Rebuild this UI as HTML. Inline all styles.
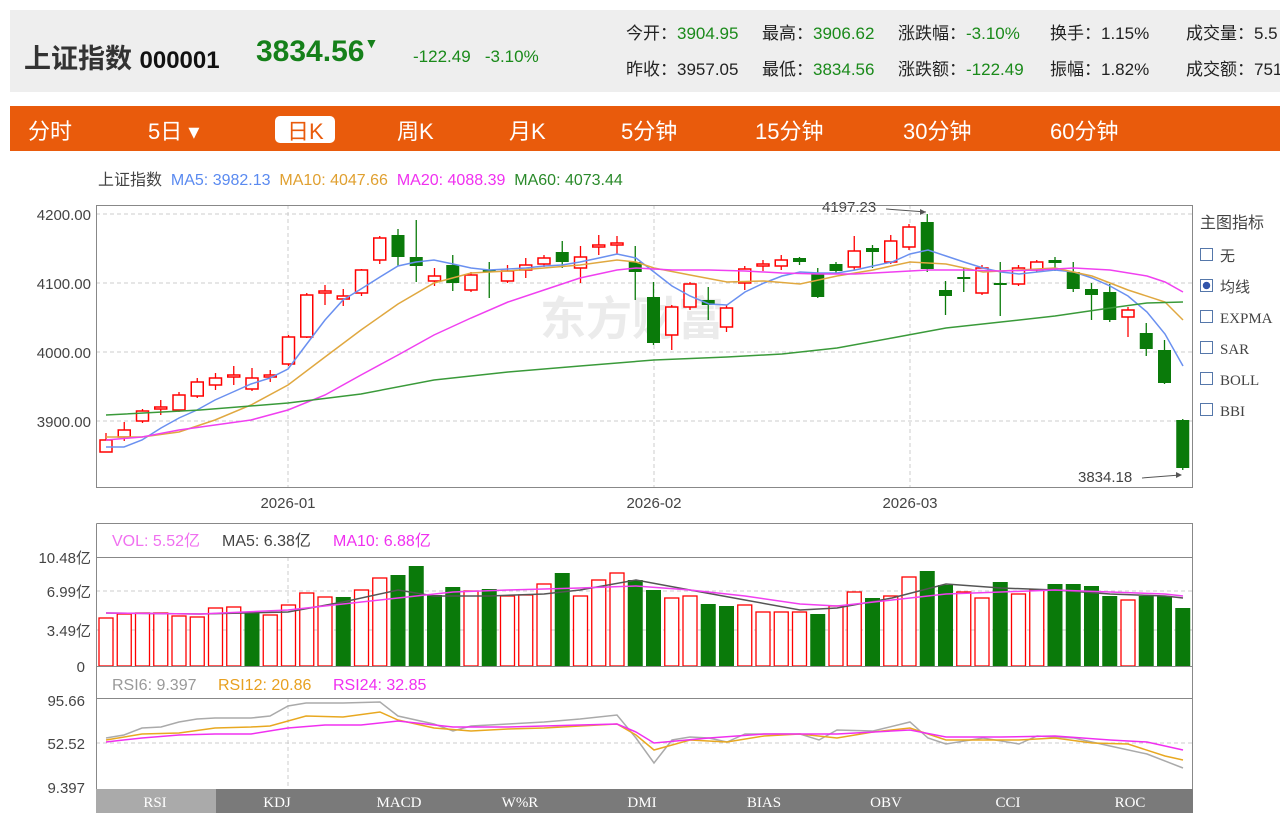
<!DOCTYPE html><html><head><meta charset="utf-8"><style>
body{margin:0;width:1280px;height:823px;overflow:hidden;background:#fff;font-family:"Liberation Sans","Noto Sans CJK SC",sans-serif;position:relative}
.a{position:absolute;white-space:nowrap}
.g{color:#1a8a1a}
</style></head><body>
<div class="a" style="left:10px;top:10px;width:1270px;height:82px;background:#eeeeee"></div>
<div class="a" style="left:24px;top:37px;font-size:27px;font-weight:bold;color:#333">上证指数 <span style="font-size:24px;color:#111">000001</span></div>
<div class="a g" style="left:256px;top:35px;font-size:30px;font-weight:bold;color:#15801a">3834.56<span style="font-size:14px;vertical-align:top">▼</span></div>
<div class="a g" style="left:413px;top:47px;font-size:17px">-122.49 &nbsp; -3.10%</div>
<div class="a" style="left:626px;top:16px;font-size:17px;color:#222;line-height:36px">今开：<span class="g">3904.95</span><br>昨收：3957.05</div>
<div class="a" style="left:762px;top:16px;font-size:17px;color:#222;line-height:36px">最高：<span class="g">3906.62</span><br>最低：<span class="g">3834.56</span></div>
<div class="a" style="left:898px;top:16px;font-size:17px;color:#222;line-height:36px">涨跌幅：<span class="g">-3.10%</span><br>涨跌额：<span class="g">-122.49</span></div>
<div class="a" style="left:1050px;top:16px;font-size:17px;color:#222;line-height:36px">换手：1.15%<br>振幅：1.82%</div>
<div class="a" style="left:1186px;top:16px;font-size:17px;color:#222;line-height:36px">成交量：5.5<br>成交额：751</div>
<div class="a" style="left:10px;top:106px;width:1270px;height:45px;background:#e95b0c"></div>
<div class="a" style="left:275px;top:116px;width:60px;height:27px;background:#fff;border-radius:5px"></div>
<div class="a" style="top:114px;font-size:22px;color:#fff;left:0;width:1280px">
<span class="a" style="left:28px">分时</span><span class="a" style="left:148px">5日 ▾</span><span class="a" style="left:287px;color:#e95b0c">日K</span><span class="a" style="left:397px">周K</span><span class="a" style="left:509px">月K</span><span class="a" style="left:621px">5分钟</span><span class="a" style="left:755px">15分钟</span><span class="a" style="left:903px">30分钟</span><span class="a" style="left:1050px">60分钟</span></div>
<div class="a" style="left:98px;top:166px;font-size:16px;color:#444">上证指数 &nbsp;<span style="color:#5a8af0">MA5: 3982.13</span> &nbsp;<span style="color:#e0a030">MA10: 4047.66</span> &nbsp;<span style="color:#f030f0">MA20: 4088.39</span> &nbsp;<span style="color:#2a8a2a">MA60: 4073.44</span></div>
<div class="a" style="left:1200px;top:209px;font-size:16px;color:#444">主图指标</div>
<div class="a" style="left:1200px;top:242px;font-size:15px;color:#444;line-height:31px;font-family:'Liberation Serif','Noto Sans CJK SC',serif">
<div><span style="display:inline-block;width:11px;height:11px;border:1px solid #5577aa;margin-right:7px"></span>无</div>
<div><span style="display:inline-block;width:11px;height:11px;border:1px solid #5577aa;margin-right:7px;background:radial-gradient(#3355aa 45%,#fff 50%)"></span>均线</div>
<div><span style="display:inline-block;width:11px;height:11px;border:1px solid #5577aa;margin-right:7px"></span>EXPMA</div>
<div><span style="display:inline-block;width:11px;height:11px;border:1px solid #5577aa;margin-right:7px"></span>SAR</div>
<div><span style="display:inline-block;width:11px;height:11px;border:1px solid #5577aa;margin-right:7px"></span>BOLL</div>
<div><span style="display:inline-block;width:11px;height:11px;border:1px solid #5577aa;margin-right:7px"></span>BBI</div></div>
<svg class="a" style="left:0;top:0" width="1280" height="823" id="s" font-family="Liberation Sans,Noto Sans CJK SC,sans-serif">
<g stroke="#ccc" stroke-dasharray="4,3" fill="none">
<path d="M96 214H1192M96 283H1192M96 352H1192M96 421H1192M288 205V487M654 205V487M910 205V487"/>
<path d="M96 591H1192M96 630H1192M288 557V666M96 743H1192M288 698V787"/></g>
<text x="540" y="335" font-size="46" font-weight="bold" fill="#ebebeb">东方财富</text>
<g font-size="15" fill="#444" text-anchor="end"><text x="91" y="220">4200.00</text><text x="91" y="289">4100.00</text><text x="91" y="358">4000.00</text><text x="91" y="427">3900.00</text>
<text x="91" y="563">10.48亿</text><text x="91" y="597">6.99亿</text><text x="91" y="636">3.49亿</text><text x="85" y="672">0</text>
<text x="85" y="706">95.66</text><text x="85" y="749">52.52</text><text x="85" y="793">9.397</text></g>
<g font-size="15" fill="#444" text-anchor="middle"><text x="288" y="508">2026-01</text><text x="654" y="508">2026-02</text><text x="910" y="508">2026-03</text></g>
<g font-size="15" fill="#444"><text x="822" y="212">4197.23</text><text x="1078" y="482">3834.18</text></g>
<path d="M886 209L926 212M1142 478L1180 475" stroke="#555" fill="none"/>
<path d="M926 212l-6-3v6zM1182 475l-6-3v6z" fill="#555"/>
<g font-size="16"><text x="112" y="546" fill="#f070f0">VOL: 5.52亿</text><text x="222" y="546" fill="#444">MA5: 6.38亿</text><text x="333" y="546" fill="#f030f0">MA10: 6.88亿</text>
<text x="112" y="690" fill="#999">RSI6: 9.397</text><text x="218" y="690" fill="#e8a020">RSI12: 20.86</text><text x="333" y="690" fill="#f030f0">RSI24: 32.85</text></g>
<g id="c"></g>
<g fill="none" stroke-width="1.5">
<polyline stroke="#6a90f0" points="106,447 124,447 142,440 161,428 179,418 197,410 215,400 233,392 251,384 270,378 288,369 306,345 325,320 343,300 361,289 380,277 398,266 416,262 434,260 453,264 471,268 489,270 508,269 526,268 544,266 562,265 580,262 599,258 617,254 636,258 654,272 672,286 690,296 709,304 727,305 745,292 764,283 782,276 800,272 819,273 837,273 855,270 873,266 892,262 910,254 928,250 946,256 964,262 983,268 1001,272 1019,274 1037,272 1055,270 1074,272 1092,278 1110,286 1128,296 1147,312 1165,334 1183,366"/>
<polyline stroke="#e0a840" points="106,437 142,437 179,432 215,420 251,405 288,385 325,357 361,330 398,304 434,283 471,273 508,271 544,268 580,265 617,260 636,262 654,268 690,275 727,282 764,281 800,284 837,276 873,270 910,262 946,264 983,272 1019,270 1055,268 1092,276 1128,290 1165,302 1183,320"/>
<polyline stroke="#f040f0" points="106,440 142,437 179,430 215,425 251,420 288,410 325,395 361,375 398,355 434,335 471,318 508,302 544,290 580,278 617,270 636,268 672,270 709,270 745,271 782,273 819,274 855,274 892,272 928,270 964,270 1001,271 1037,270 1074,268 1110,270 1147,276 1165,282 1183,292"/>
<polyline stroke="#3a9a3a" points="106,415 200,410 288,403 361,394 434,380 508,372 580,366 654,360 727,357 782,354 837,348 892,338 946,328 1001,322 1055,316 1110,308 1147,303 1183,302"/>
<polyline stroke="#555" points="106,613 200,614 288,612 343,602 398,590 434,596 489,596 544,594 580,590 636,580 690,590 745,600 800,610 837,608 892,598 946,584 1001,588 1055,590 1110,594 1165,596 1183,598"/>
<polyline stroke="#f040f0" points="106,613 200,614 288,610 343,604 398,598 453,592 508,590 580,588 636,586 690,590 745,596 800,604 837,606 892,600 946,594 1001,592 1055,590 1110,592 1165,594 1183,596"/>
<polyline stroke="#aaa" points="106,738 124,735 142,728 161,727 179,722 197,719 215,718 251,718 270,716 288,706 306,703 343,703 380,702 398,716 434,724 453,731 471,726 508,724 544,722 580,719 617,715 636,738 654,763 672,740 690,737 709,738 727,742 745,734 800,734 819,740 837,730 873,731 910,722 928,738 946,744 983,738 1019,744 1037,736 1074,738 1110,746 1147,754 1183,768"/>
<polyline stroke="#e8a820" points="106,740 142,734 179,733 215,728 251,727 270,726 306,716 343,717 380,712 398,720 434,728 471,731 508,729 544,728 580,726 617,724 636,735 654,750 690,740 727,742 764,736 800,734 837,738 873,732 910,728 946,740 983,740 1019,740 1055,738 1092,743 1128,744 1165,756 1183,760"/>
<polyline stroke="#f030f0" points="106,742 142,738 179,735 215,734 251,734 288,728 325,725 361,725 398,721 453,727 508,727 580,725 617,724 636,732 654,743 709,738 764,734 837,734 910,730 946,737 1001,737 1055,736 1110,740 1147,742 1183,750"/></g>
<g fill="none" stroke="#888"><rect x="96.5" y="205.5" width="1096" height="282"/><path d="M96.5 523.5H1192.5V813M96.5 523.5V813M96 557.5H1192M96 698.5H1192M96 666.5H1192"/></g>
<rect x="96" y="789" width="1097" height="24" fill="#7a7a7a"/><rect x="96" y="789" width="120" height="24" fill="#aaa"/>
<g font-size="15" fill="#fff" text-anchor="middle" font-family="Liberation Serif,serif"><text x="155" y="807">RSI</text><text x="277" y="807">KDJ</text><text x="399" y="807">MACD</text><text x="520" y="807">W%R</text><text x="642" y="807">DMI</text><text x="764" y="807">BIAS</text><text x="886" y="807">OBV</text><text x="1008" y="807">CCI</text><text x="1130" y="807">ROC</text></g>
</svg>
<script>
var C=[[440,452,433,452,1],[430,437,422,441,1],[411,421,409,423,1],[407,409,400,415,1],[395,410,392,412,1],[382,396,378,398,1],[378,385,373,390,1],[375,377,366,385,1],[378,389,368,391,1],[375,377,370,382,1],[337,364,335,366,1],[295,337,293,338,1],[291,293,285,305,1],[296,299,289,306,1],[270,293,269,296,1],[238,260,236,264,1],[235,257,229,266,0],[257,266,220,282,0],[276,281,268,286,1],[265,283,255,291,0],[275,290,272,292,1],[270,272,262,298,0],[271,281,265,283,1],[265,270,258,278,1],[258,264,255,267,1],[252,262,241,268,0],[257,268,246,283,1],[245,247,235,255,1],[243,245,236,254,1],[262,272,246,300,0],[297,343,282,345,0],[307,335,305,350,1],[284,307,282,310,1],[300,305,287,320,0],[308,327,305,332,1],[269,283,266,290,1],[264,266,260,271,1],[260,266,255,270,1],[258,262,257,265,0],[273,297,268,298,0],[264,271,262,273,0],[251,267,236,270,1],[248,252,245,268,0],[241,262,235,264,1],[227,247,224,250,1],[222,269,214,272,0],[290,296,281,315,0],[277,279,268,292,0],[268,293,265,295,1],[283,285,262,316,0],[268,284,265,286,1],[262,270,260,272,1],[260,263,257,271,0],[272,289,262,292,0],[289,295,283,320,0],[292,320,284,322,0],[310,317,307,337,1],[333,349,323,356,0],[350,383,340,384,0],[420,468,419,470,0]];
var V=[[618,1],[614,1],[613,1],[613,1],[616,1],[617,1],[608,1],[607,1],[613,0],[615,1],[605,1],[593,1],[597,1],[597,0],[590,1],[578,1],[575,0],[566,0],[595,0],[587,0],[591,1],[589,0],[596,1],[595,1],[584,1],[573,0],[596,1],[580,1],[573,1],[580,0],[590,0],[598,1],[596,1],[604,0],[606,0],[605,1],[612,1],[612,1],[612,1],[614,0],[606,1],[592,1],[598,0],[596,1],[577,1],[571,0],[585,0],[592,1],[598,1],[582,0],[594,1],[590,1],[584,0],[584,0],[586,0],[596,0],[600,1],[596,0],[596,0],[608,0]];
var h='';C.forEach(function(c,i){var x=106+i*18.25,col=c[4]?'#f00':'#0a7a0a';
h+='<line x1="'+x+'" x2="'+x+'" y1="'+c[2]+'" y2="'+c[3]+'" stroke="'+col+'" stroke-width="1.3"/>';
var bh=Math.max(c[1]-c[0],1.5);
h+=c[4]?'<rect x="'+(x-6)+'" y="'+c[0]+'" width="12" height="'+bh+'" fill="#fff" stroke="#f00" stroke-width="1.5"/>':'<rect x="'+(x-6.5)+'" y="'+c[0]+'" width="13" height="'+bh+'" fill="#0a7a0a"/>';
var v=V[i];h+=v[1]?'<rect x="'+(x-7)+'" y="'+v[0]+'" width="14" height="'+(666-v[0])+'" fill="#fff" stroke="#f00" stroke-width="1.3"/>':'<rect x="'+(x-7.5)+'" y="'+v[0]+'" width="15" height="'+(666-v[0])+'" fill="#0a7a0a"/>';});
document.getElementById('c').innerHTML=h;
</script>
</body></html>
